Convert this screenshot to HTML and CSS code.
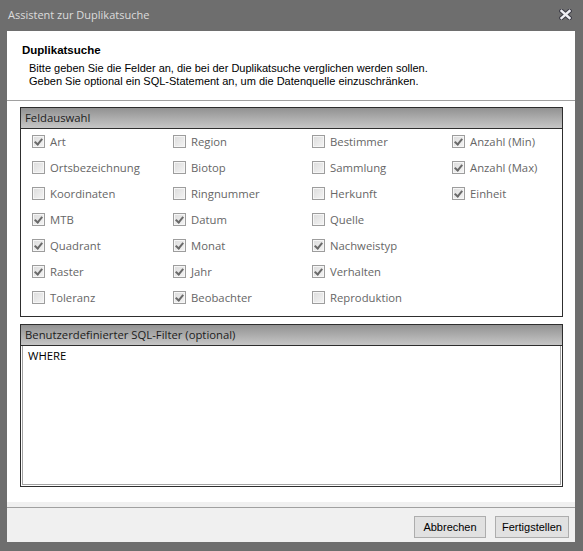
FILE: index.html
```html
<!DOCTYPE html>
<html lang="de">
<head>
<meta charset="utf-8">
<title>Assistent zur Duplikatsuche</title>
<link rel="stylesheet" href="styles.css">
</head>
<body>
<div class="window">
  <div class="titlebar">
    <span class="title">Assistent zur Duplikatsuche</span>
    <svg class="close" width="13" height="11" viewBox="0 0 13 11">
      <path d="M2.5 2 L10.5 9 M10.5 2 L2.5 9" stroke="#3c3c46" stroke-width="4.5" stroke-linecap="square" fill="none"/>
      <path d="M2.5 2 L10.5 9 M10.5 2 L2.5 9" stroke="#eeeef4" stroke-width="2.4" stroke-linecap="square" fill="none"/>
    </svg>
  </div>
  <div class="client">
    <div class="header">
      <div class="h-title">Duplikatsuche</div>
      <div class="h-desc">Bitte geben Sie die Felder an, die bei der Duplikatsuche verglichen werden sollen.<br>Geben Sie optional ein SQL-Statement an, um die Datenquelle einzuschränken.</div>
    </div>
    <div class="body">
      <div class="group">
        <div class="group-head">Feldauswahl</div>
        <div class="grid">
          <label class="cb on"><span class="box"></span>Art</label>
          <label class="cb"><span class="box"></span>Region</label>
          <label class="cb"><span class="box"></span>Bestimmer</label>
          <label class="cb on"><span class="box"></span>Anzahl (Min)</label>

          <label class="cb"><span class="box"></span>Ortsbezeichnung</label>
          <label class="cb"><span class="box"></span>Biotop</label>
          <label class="cb"><span class="box"></span>Sammlung</label>
          <label class="cb on"><span class="box"></span>Anzahl (Max)</label>

          <label class="cb"><span class="box"></span>Koordinaten</label>
          <label class="cb"><span class="box"></span>Ringnummer</label>
          <label class="cb"><span class="box"></span>Herkunft</label>
          <label class="cb on"><span class="box"></span>Einheit</label>

          <label class="cb on"><span class="box"></span>MTB</label>
          <label class="cb on"><span class="box"></span>Datum</label>
          <label class="cb"><span class="box"></span>Quelle</label>
          <span></span>

          <label class="cb on"><span class="box"></span>Quadrant</label>
          <label class="cb on"><span class="box"></span>Monat</label>
          <label class="cb on"><span class="box"></span>Nachweistyp</label>
          <span></span>

          <label class="cb on"><span class="box"></span>Raster</label>
          <label class="cb on"><span class="box"></span>Jahr</label>
          <label class="cb on"><span class="box"></span>Verhalten</label>
          <span></span>

          <label class="cb"><span class="box"></span>Toleranz</label>
          <label class="cb on"><span class="box"></span>Beobachter</label>
          <label class="cb"><span class="box"></span>Reproduktion</label>
          <span></span>
        </div>
      </div>
      <div class="group sql">
        <div class="group-head">Benutzerdefinierter SQL-Filter (optional)</div>
        <div class="textbox">WHERE</div>
      </div>
    </div>
    <div class="footer">
      <div class="buttons">
        <button class="btn">Abbrechen</button>
        <button class="btn">Fertigstellen</button>
      </div>
    </div>
  </div>
</div>
</body>
</html>
```
FILE: styles.css
```css
html, body {
  margin: 0;
  padding: 0;
}
body {
  width: 583px;
  height: 551px;
  overflow: hidden;
  background: #6e6e6e;
}
.window {
  width: 583px;
  height: 551px;
  box-sizing: border-box;
  background: #6e6e6e;
  padding: 0 8px 9px 7px;
  display: flex;
  flex-direction: column;
  border-top-right-radius: 4px;
}
.titlebar {
  height: 31px;
  display: flex;
  align-items: center;
  justify-content: space-between;
  padding: 0 3px 2px 1px;
  box-sizing: border-box;
}
.title {
  font-family: "Open Sans", "Noto Sans", sans-serif;
  font-size: 11px;
  color: #dcdcdc;
}
.close {
  display: block;
  margin-top: -1px;
}
.client {
  flex: 1;
  background: #ffffff;
  display: flex;
  flex-direction: column;
}
.header {
  height: 70px;
  box-sizing: border-box;
  border-bottom: 1px solid #a0a0a0;
  padding: 12px 0 0 15px;
  font-family: "Liberation Sans", Arial, sans-serif;
  font-size: 11px;
  color: #000;
}
.h-title {
  font-weight: bold;
  font-size: 11.5px;
  line-height: 14px;
}
.h-desc {
  margin: 5px 0 0 7px;
  line-height: 13px;
}
.body {
  flex: 1;
  padding: 6px 12px 0 13px;
  display: flex;
  flex-direction: column;
  gap: 7px;
}
.group {
  border: 1px solid #2e2e2e;
  font-family: "Open Sans", "Noto Sans", sans-serif;
  font-size: 11.3px;
}
.group-head {
  height: 20px;
  line-height: 20px;
  padding-left: 4px;
  background: linear-gradient(#929292, #c6c6c6);
  border-bottom: 1px solid #2e2e2e;
  color: #1c1c1c;
}
.grid {
  display: grid;
  grid-template-columns: 141px 139px 140px 140px;
  grid-auto-rows: 26px;
  margin-top: -1px;
  padding: 0 0 6px 11px;
}
.cb {
  display: flex;
  align-items: center;
  gap: 5px;
  color: #666;
  white-space: nowrap;
}
.box {
  width: 11px;
  height: 11px;
  border: 1px solid #9d9d9d;
  background: linear-gradient(135deg, #dcdcdc, #f4f4f4);
  box-shadow: inset 0 0 0 1px #f6f6f6;
  position: relative;
  flex: none;
}
.cb.on .box::after {
  content: "";
  position: absolute;
  left: 3px;
  top: 1px;
  width: 3px;
  height: 6px;
  border: solid #6a6a6a;
  border-width: 0 2px 2px 0;
  transform: rotate(40deg);
}
.sql {
  height: 161px;
  display: flex;
  flex-direction: column;
}
.textbox {
  flex: 1;
  margin: 0 1px 1px 1px;
  border: 1px solid #a3a3a3;
  border-top: none;
  padding: 2px 5px;
  color: #000;
  font-size: 11.3px;
  line-height: 15px;
}
.footer {
  height: 40px;
  background: #f0f0f0;
  padding-top: 5px;
  box-sizing: border-box;
}
.buttons {
  border-top: 1px solid #a0a0a0;
  display: flex;
  justify-content: flex-end;
  gap: 9px;
  padding: 8px 6px 0 0;
}
.btn {
  height: 22px;
  padding: 0;
  border: 1px solid #adadad;
  background: #e1e1e1;
  font-family: "Liberation Sans", Arial, sans-serif;
  font-size: 11px;
  color: #000;
}
.btn:first-child {
  width: 72px;
}
.btn:last-child {
  width: 74px;
}
```
